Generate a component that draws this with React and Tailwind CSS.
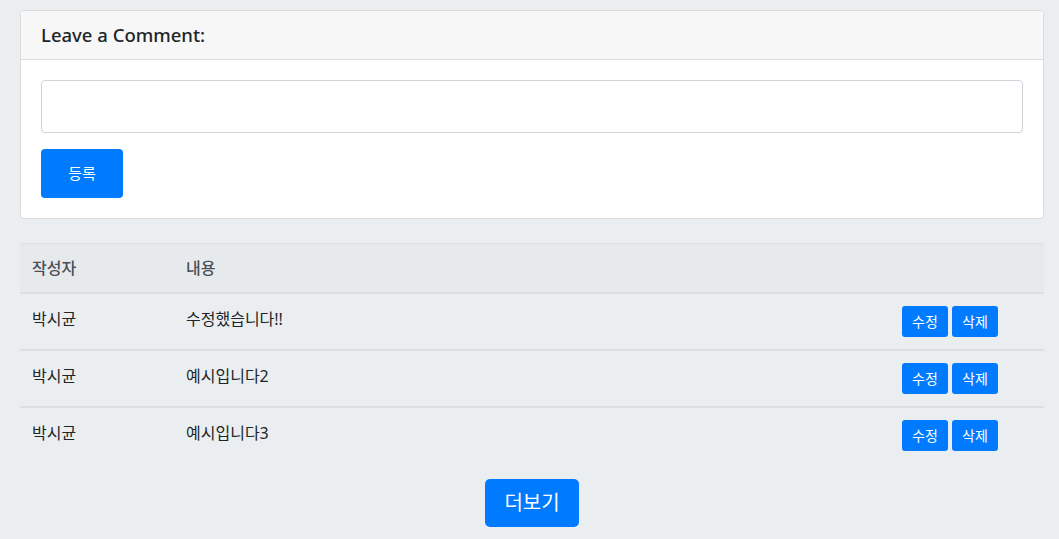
const ROWS = [
  { id: 1, writer: '박시균', content: '수정했습니다!!' },
  { id: 2, writer: '박시균', content: '예시입니다2' },
  { id: 3, writer: '박시균', content: '예시입니다3' },
]

export default function App() {
  return (
    <div
      className="min-h-[539px] bg-[#ebeef0] pl-5 pr-[15px] pt-[10px] text-[#212529]"
      style={{ fontFamily: '"Noto Sans", "Noto Sans CJK KR", sans-serif' }}
    >
      <div className="bg-white border border-[#dcdcdc] rounded-[4px] overflow-hidden">
        <div className="h-[49px] bg-[#f7f7f7] border-b border-[#dcdcdc] px-5 flex items-center">
          <h5 className="text-[18.5px] font-medium leading-none">Leave a Comment:</h5>
        </div>
        <div className="p-5">
          <div className="h-[53px] border border-[#ced4da] rounded-[4px] bg-white" />
          <button className="mt-4 w-[82px] h-[49px] bg-[#007bff] text-white text-[15px] rounded-[4px]">등록</button>
        </div>
      </div>

      <table className="mt-6 w-full border-collapse text-[16px]">
        <thead>
          <tr className="bg-[#e7eaed] border-t border-[#dfe2e5] border-b-2 border-b-[#dcdfe2] text-[#495057]">
            <th className="h-[49px] w-[154px] px-3 text-left font-medium">작성자</th>
            <th className="px-3 text-left font-medium">내용</th>
            <th className="w-[142px]" />
          </tr>
        </thead>
        <tbody>
          {ROWS.map((r, i) => (
            <tr key={r.id} className={i < ROWS.length - 1 ? 'border-b-2 border-[#dcdfe2]' : ''}>
              <td className="h-[57px] px-3 align-top pt-[13px]">{r.writer}</td>
              <td className="px-3 align-top pt-[13px]">{r.content}</td>
              <td className="align-top pt-3">
                <div className="flex gap-1">
                  <button className="w-[46px] h-[31px] bg-[#007bff] text-white text-[14px] rounded-[3px]">수정</button>
                  <button className="w-[46px] h-[31px] bg-[#007bff] text-white text-[14px] rounded-[3px]">삭제</button>
                </div>
              </td>
            </tr>
          ))}
        </tbody>
      </table>

      <div className="flex justify-center pt-[15px] pb-3">
        <button className="w-[94px] h-[48px] bg-[#007bff] text-white text-[20px] rounded-[5px]">더보기</button>
      </div>
    </div>
  )
}
